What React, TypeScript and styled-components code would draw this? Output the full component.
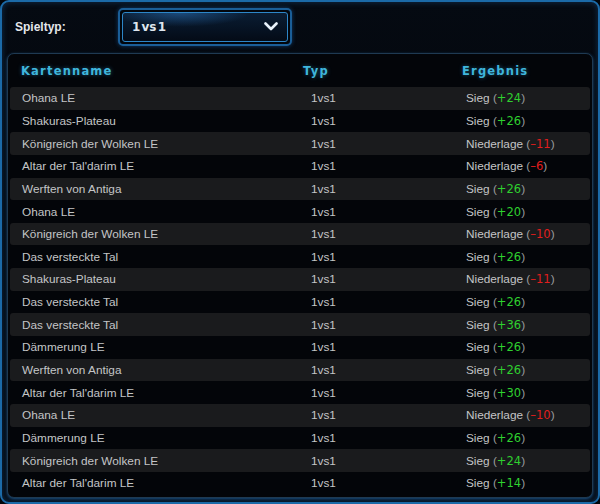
import React from "react";
import styled, { createGlobalStyle } from "styled-components";

const Global = createGlobalStyle`
  html, body { margin: 0; padding: 0; background: #02050a; }
  #root { width: 600px; height: 504px; }
`;

const Frame = styled.div`
  box-sizing: border-box;
  width: 600px;
  height: 504px;
  border: 2px solid #1b6aa8;
  border-radius: 9px;
  background: linear-gradient(180deg, #050a12 0%, #03060b 40%, #04080f 100%);
  box-shadow: inset 0 0 6px rgba(40, 120, 200, 0.35);
  padding: 0 5px 5px 5px;
  display: flex;
  flex-direction: column;
  font-family: "Liberation Sans", Arial, sans-serif;
`;

const TopBar = styled.div`
  height: 51px;
  display: flex;
  align-items: center;
  padding-left: 8px;
  flex-shrink: 0;
`;

const Label = styled.span`
  color: #e4e6ea;
  font-weight: bold;
  font-size: 12px;
  width: 103px;
  margin-top: -1px;
`;

const DropOuter = styled.div`
  box-sizing: border-box;
  width: 174px;
  height: 38px;
  margin-top: -2px;
  border: 2px solid #1a5e98;
  border-radius: 5px;
  background: #02060c;
  padding: 2px;
  box-shadow: 0 0 4px rgba(30, 110, 190, 0.5);
`;

const DropInner = styled.div`
  box-sizing: border-box;
  height: 100%;
  border: 1px solid #2d86c8;
  border-radius: 3px;
  background:
    radial-gradient(ellipse 60% 70% at 35% 0%, rgba(40, 110, 180, 0.55), rgba(0, 0, 0, 0) 70%),
    linear-gradient(180deg, #0a1d33 0%, #061222 60%, #040b16 100%);
  display: flex;
  align-items: center;
  justify-content: space-between;
  padding: 0 9px 0 9px;
`;

const DropText = styled.span`
  color: #dfe6ee;
  font-family: "DejaVu Sans", sans-serif;
  font-weight: bold;
  font-size: 12px;
  word-spacing: -3px;
`;

const Panel = styled.div`
  flex: 1;
  border: 1px solid #1f3a52;
  border-radius: 7px;
  background: #030509;
  padding: 0 2px 2px 2px;
  display: flex;
  flex-direction: column;
  box-shadow: 0 1px 3px rgba(40, 130, 210, 0.6);
`;

const HeaderRow = styled.div`
  height: 33px;
  display: grid;
  grid-template-columns: 293px 159px 1fr;
  align-items: center;
`;

const HeadCell = styled.div<{ $pad: number }>`
  padding-left: ${(p) => p.$pad}px;
  color: #3fb6dc;
  font-family: "DejaVu Sans", sans-serif;
  font-weight: bold;
  font-size: 11.5px;
  letter-spacing: 1.2px;
  text-shadow: 0 0 4px rgba(60, 170, 230, 0.45);
`;

const Row = styled.div<{ $alt: boolean }>`
  height: 22.65px;
  display: grid;
  grid-template-columns: 293px 159px 1fr;
  align-items: center;
  background: ${(p) => (p.$alt ? "#1a1b1d" : "transparent")};
  border-radius: 3px;
  color: #c4c5c7;
  font-size: 11.8px;
`;

const Cell = styled.div<{ $pad: number }>`
  padding-left: ${(p) => p.$pad}px;
  white-space: nowrap;
`;

const Delta = styled.span<{ $win: boolean }>`
  color: ${(p) => (p.$win ? "#2fd12f" : "#e01e1e")};
  font-family: "DejaVu Sans", sans-serif;
  font-size: 11.5px;
`;

const Paren = styled.span`
  color: #9a9b9d;
`;

type Game = { map: string; win: boolean; delta: number };

const games: Game[] = [
  { map: "Ohana LE", win: true, delta: 24 },
  { map: "Shakuras-Plateau", win: true, delta: 26 },
  { map: "Königreich der Wolken LE", win: false, delta: 11 },
  { map: "Altar der Tal'darim LE", win: false, delta: 6 },
  { map: "Werften von Antiga", win: true, delta: 26 },
  { map: "Ohana LE", win: true, delta: 20 },
  { map: "Königreich der Wolken LE", win: false, delta: 10 },
  { map: "Das versteckte Tal", win: true, delta: 26 },
  { map: "Shakuras-Plateau", win: false, delta: 11 },
  { map: "Das versteckte Tal", win: true, delta: 26 },
  { map: "Das versteckte Tal", win: true, delta: 36 },
  { map: "Dämmerung LE", win: true, delta: 26 },
  { map: "Werften von Antiga", win: true, delta: 26 },
  { map: "Altar der Tal'darim LE", win: true, delta: 30 },
  { map: "Ohana LE", win: false, delta: 10 },
  { map: "Dämmerung LE", win: true, delta: 26 },
  { map: "Königreich der Wolken LE", win: true, delta: 24 },
  { map: "Altar der Tal'darim LE", win: true, delta: 14 },
];

const Chevron = () => (
  <svg width="14" height="9" viewBox="0 0 14 9">
    <path
      d="M1.5 1.5 L7 7 L12.5 1.5"
      fill="none"
      stroke="#e8f2fb"
      strokeWidth="2.6"
      strokeLinecap="round"
      strokeLinejoin="round"
    />
  </svg>
);

export default function App() {
  return (
    <>
      <Global />
      <Frame>
        <TopBar>
          <Label>Spieltyp:</Label>
          <DropOuter>
            <DropInner>
              <DropText>1 vs 1</DropText>
              <Chevron />
            </DropInner>
          </DropOuter>
        </TopBar>
        <Panel>
          <HeaderRow>
            <HeadCell $pad={11}>Kartenname</HeadCell>
            <HeadCell $pad={0}>Typ</HeadCell>
            <HeadCell $pad={0}>Ergebnis</HeadCell>
          </HeaderRow>
          {games.map((g, i) => (
            <Row key={i} $alt={i % 2 === 0}>
              <Cell $pad={12}>{g.map}</Cell>
              <Cell $pad={8}>1vs1</Cell>
              <Cell $pad={4}>
                {g.win ? "Sieg" : "Niederlage"} <Paren>(</Paren>
                <Delta $win={g.win}>
                  {g.win ? "+" : "–"}
                  {g.delta}
                </Delta>
                <Paren>)</Paren>
              </Cell>
            </Row>
          ))}
        </Panel>
      </Frame>
    </>
  );
}
